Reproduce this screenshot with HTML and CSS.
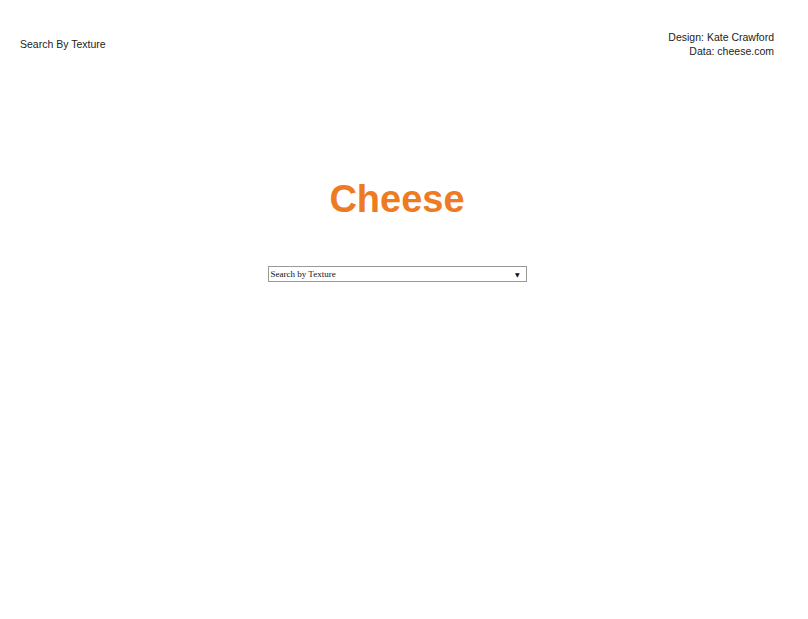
FILE: index.html
```html
<!DOCTYPE html>
<html>
<head>
<meta charset="utf-8">
<link rel="stylesheet" href="styles.css">
</head>
<body>
<div class="page">
  <header class="top">
    <div class="nav">Search By Texture</div>
    <div class="credits">
      <div>Design: Kate Crawford</div>
      <div>Data: cheese.com</div>
    </div>
  </header>
  <main class="main">
    <h1 class="title">Cheese</h1>
    <div class="select">
      <span class="select-label">Search by Texture</span>
      <span class="select-arrow">▼</span>
    </div>
  </main>
</div>
</body>
</html>
```
FILE: styles.css
```css
html, body {
  margin: 0;
  padding: 0;
  background: #fff;
}
.page {
  width: 754px;
  margin-left: 20px;
  font-family: "Liberation Sans", Arial, sans-serif;
  color: #222;
}
.top {
  display: flex;
  justify-content: space-between;
  align-items: flex-start;
  padding-top: 30px;
  font-size: 10.5px;
  line-height: 14px;
}
.nav {
  padding-top: 7px;
}
.credits {
  text-align: right;
}
.main {
  display: flex;
  flex-direction: column;
  align-items: center;
}
.title {
  margin: 119px 0 0 0;
  font-size: 38px;
  line-height: 44px;
  font-weight: bold;
  color: #ee7a22;
}
.select {
  margin-top: 45px;
  width: 257px;
  height: 14px;
  border: 1px solid #999;
  display: flex;
  align-items: center;
  justify-content: space-between;
  font-family: "Liberation Serif", "Times New Roman", serif;
  font-size: 9px;
  color: #111;
}
.select-label {
  padding-left: 2px;
}
.select-arrow {
  font-size: 6px;
  padding-right: 6px;
  font-family: "DejaVu Sans", sans-serif;
}
```
